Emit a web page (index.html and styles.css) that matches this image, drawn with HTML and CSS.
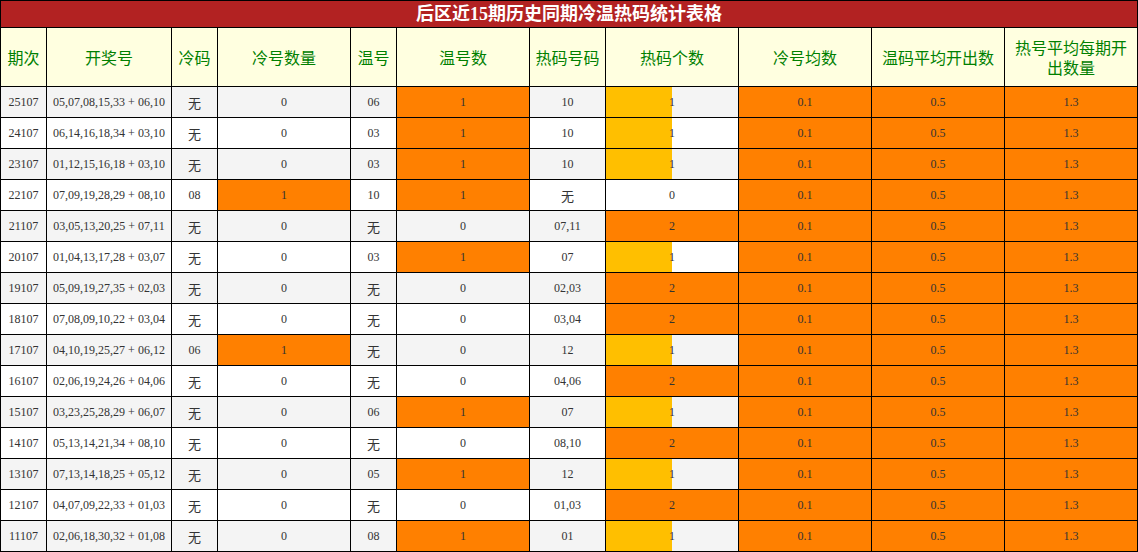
FILE: index.html
```html
<!DOCTYPE html>
<html lang="zh-CN">
<head>
<meta charset="utf-8">
<title>后区近15期历史同期冷温热码统计表格</title>
<link rel="stylesheet" href="styles.css">
</head>
<body>
<div class="sheet">
  <div class="title">后区近15期历史同期冷温热码统计表格</div>

  <div class="row head">
    <div class="c">期次</div><div class="c">开奖号</div><div class="c">冷码</div><div class="c">冷号数量</div><div class="c">温号</div><div class="c">温号数</div><div class="c">热码号码</div><div class="c">热码个数</div><div class="c">冷号均数</div><div class="c">温码平均开出数</div><div class="c">热号平均每期开出数量</div>
  </div>

  <div class="row odd"><div class="c">25107</div><div class="c">05,07,08,15,33 + 06,10</div><div class="c cjk">无</div><div class="c">0</div><div class="c">06</div><div class="c hi">1</div><div class="c">10</div><div class="c half">1</div><div class="c hi">0.1</div><div class="c hi">0.5</div><div class="c hi">1.3</div></div>
  <div class="row"><div class="c">24107</div><div class="c">06,14,16,18,34 + 03,10</div><div class="c cjk">无</div><div class="c">0</div><div class="c">03</div><div class="c hi">1</div><div class="c">10</div><div class="c half">1</div><div class="c hi">0.1</div><div class="c hi">0.5</div><div class="c hi">1.3</div></div>
  <div class="row odd"><div class="c">23107</div><div class="c">01,12,15,16,18 + 03,10</div><div class="c cjk">无</div><div class="c">0</div><div class="c">03</div><div class="c hi">1</div><div class="c">10</div><div class="c half">1</div><div class="c hi">0.1</div><div class="c hi">0.5</div><div class="c hi">1.3</div></div>
  <div class="row"><div class="c">22107</div><div class="c">07,09,19,28,29 + 08,10</div><div class="c">08</div><div class="c hi">1</div><div class="c">10</div><div class="c hi">1</div><div class="c cjk">无</div><div class="c">0</div><div class="c hi">0.1</div><div class="c hi">0.5</div><div class="c hi">1.3</div></div>
  <div class="row odd"><div class="c">21107</div><div class="c">03,05,13,20,25 + 07,11</div><div class="c cjk">无</div><div class="c">0</div><div class="c cjk">无</div><div class="c">0</div><div class="c">07,11</div><div class="c hi">2</div><div class="c hi">0.1</div><div class="c hi">0.5</div><div class="c hi">1.3</div></div>
  <div class="row"><div class="c">20107</div><div class="c">01,04,13,17,28 + 03,07</div><div class="c cjk">无</div><div class="c">0</div><div class="c">03</div><div class="c hi">1</div><div class="c">07</div><div class="c half">1</div><div class="c hi">0.1</div><div class="c hi">0.5</div><div class="c hi">1.3</div></div>
  <div class="row odd"><div class="c">19107</div><div class="c">05,09,19,27,35 + 02,03</div><div class="c cjk">无</div><div class="c">0</div><div class="c cjk">无</div><div class="c">0</div><div class="c">02,03</div><div class="c hi">2</div><div class="c hi">0.1</div><div class="c hi">0.5</div><div class="c hi">1.3</div></div>
  <div class="row"><div class="c">18107</div><div class="c">07,08,09,10,22 + 03,04</div><div class="c cjk">无</div><div class="c">0</div><div class="c cjk">无</div><div class="c">0</div><div class="c">03,04</div><div class="c hi">2</div><div class="c hi">0.1</div><div class="c hi">0.5</div><div class="c hi">1.3</div></div>
  <div class="row odd"><div class="c">17107</div><div class="c">04,10,19,25,27 + 06,12</div><div class="c">06</div><div class="c hi">1</div><div class="c cjk">无</div><div class="c">0</div><div class="c">12</div><div class="c half">1</div><div class="c hi">0.1</div><div class="c hi">0.5</div><div class="c hi">1.3</div></div>
  <div class="row"><div class="c">16107</div><div class="c">02,06,19,24,26 + 04,06</div><div class="c cjk">无</div><div class="c">0</div><div class="c cjk">无</div><div class="c">0</div><div class="c">04,06</div><div class="c hi">2</div><div class="c hi">0.1</div><div class="c hi">0.5</div><div class="c hi">1.3</div></div>
  <div class="row odd"><div class="c">15107</div><div class="c">03,23,25,28,29 + 06,07</div><div class="c cjk">无</div><div class="c">0</div><div class="c">06</div><div class="c hi">1</div><div class="c">07</div><div class="c half">1</div><div class="c hi">0.1</div><div class="c hi">0.5</div><div class="c hi">1.3</div></div>
  <div class="row"><div class="c">14107</div><div class="c">05,13,14,21,34 + 08,10</div><div class="c cjk">无</div><div class="c">0</div><div class="c cjk">无</div><div class="c">0</div><div class="c">08,10</div><div class="c hi">2</div><div class="c hi">0.1</div><div class="c hi">0.5</div><div class="c hi">1.3</div></div>
  <div class="row odd"><div class="c">13107</div><div class="c">07,13,14,18,25 + 05,12</div><div class="c cjk">无</div><div class="c">0</div><div class="c">05</div><div class="c hi">1</div><div class="c">12</div><div class="c half">1</div><div class="c hi">0.1</div><div class="c hi">0.5</div><div class="c hi">1.3</div></div>
  <div class="row"><div class="c">12107</div><div class="c">04,07,09,22,33 + 01,03</div><div class="c cjk">无</div><div class="c">0</div><div class="c cjk">无</div><div class="c">0</div><div class="c">01,03</div><div class="c hi">2</div><div class="c hi">0.1</div><div class="c hi">0.5</div><div class="c hi">1.3</div></div>
  <div class="row odd"><div class="c">11107</div><div class="c">02,06,18,30,32 + 01,08</div><div class="c cjk">无</div><div class="c">0</div><div class="c">08</div><div class="c hi">1</div><div class="c">01</div><div class="c half">1</div><div class="c hi">0.1</div><div class="c hi">0.5</div><div class="c hi">1.3</div></div>
</div>
</body>
</html>
```

FILE: styles.css
```css
html, body {
  margin: 0;
  padding: 0;
  background: #fff;
}

.sheet {
  display: grid;
  grid-template-columns: 45px 124px 45px 132px 45px 132px 75px 132px 132px 132px 132px;
  grid-template-rows: 26px 58px repeat(15, 30px);
  gap: 1px;
  padding: 1px;
  width: 1138px;
  box-sizing: border-box;
  background: #000;
  font-family: "Liberation Serif", "Noto Sans CJK SC", serif;
  font-size: 12px;
  color: #333;
}

.title {
  grid-column: 1 / -1;
  background: #b22222;
  color: #fff;
  font-weight: bold;
  font-size: 18px;
  display: flex;
  align-items: center;
  justify-content: center;
  line-height: 1;
}

.row {
  display: contents;
}

.c {
  display: flex;
  align-items: center;
  justify-content: center;
  text-align: center;
  background: #fff;
  white-space: nowrap;
}

.odd .c {
  background: #f4f4f4;
}

.head .c {
  background: #ffffe0;
  color: #008000;
  font-size: 16px;
  line-height: 20px;
  white-space: normal;
  padding: 4px 4px 0;
}

.cjk {
  font-size: 13px;
}

.row .hi {
  background: #ff8000;
}

.row .half {
  background: linear-gradient(to right, #ffbf00 0, #ffbf00 50%, transparent 50%);
  background-color: #fff;
}

.odd .half {
  background-color: #f4f4f4;
}
```
